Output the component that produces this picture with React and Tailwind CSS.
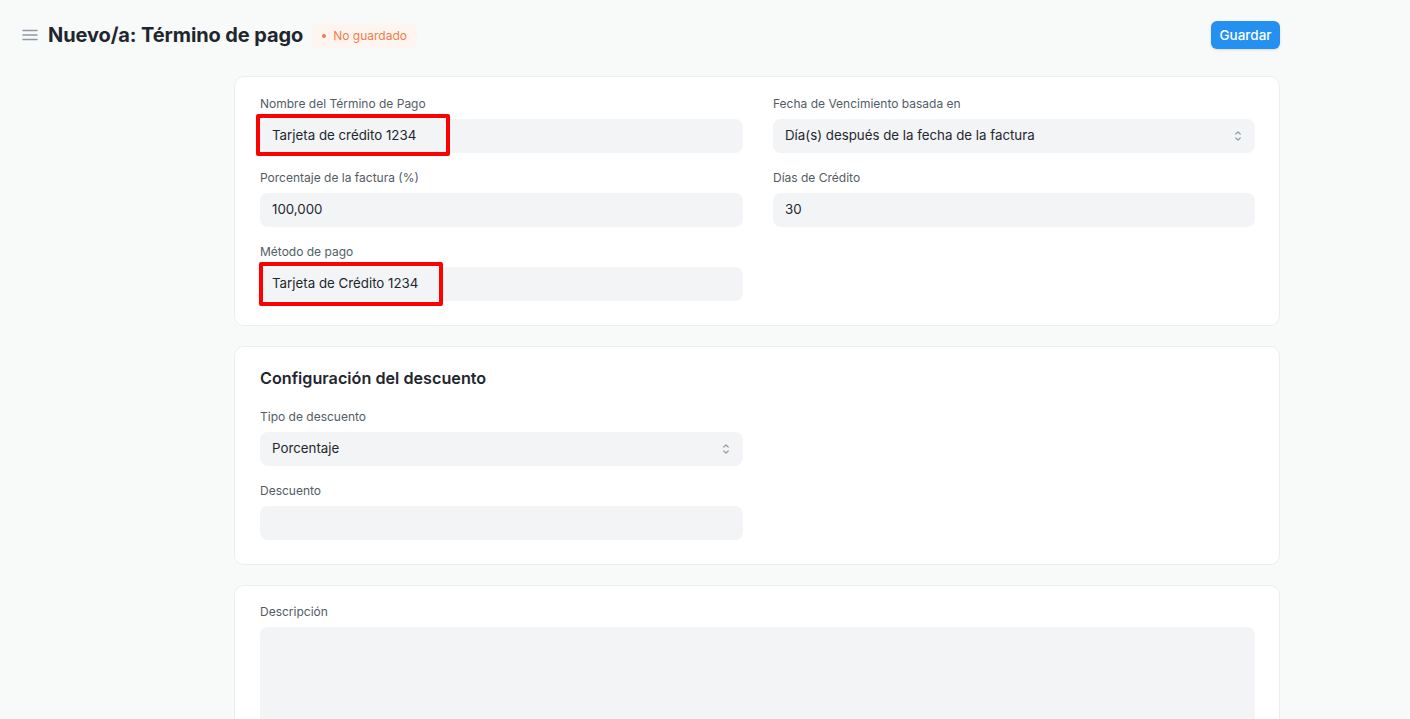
import React from "react";

function Chevrons() {
  return (
    <svg width="12" height="16" viewBox="0 0 12 16" fill="none" stroke="#8d99a6" strokeWidth="1.2" strokeLinecap="round" strokeLinejoin="round">
      <path d="M3.8 6 L6 3.8 L8.2 6" />
      <path d="M3.8 10 L6 12.2 L8.2 10" />
    </svg>
  );
}

function Field({ label, value, select, highlight }) {
  return (
    <div className="flex flex-col">
      <div className="text-[12px] leading-4 text-[#525c65] mb-[7px]">{label}</div>
      <div className="relative h-[34px] rounded-lg bg-[#f3f4f6] flex items-center px-3 text-[13.3px] text-[#1f272e]">
        <span>{value}</span>
        {select && (
          <span className="ml-auto mr-[-1px] flex items-center">
            <Chevrons />
          </span>
        )}
        {highlight && (
          <span className={"absolute border-4 border-[#ff0000] rounded-[2px] pointer-events-none " + highlight} />
        )}
      </div>
    </div>
  );
}

export default function App() {
  return (
    <div className="min-h-screen bg-[#f8f9f9] font-['Inter','Liberation_Sans',sans-serif]">
      <div className="h-[70px] mb-[6px] flex items-center pl-[22px] pr-[130px]">
        <svg width="16" height="14" viewBox="0 0 16 14" className="mr-[10px]" stroke="#8d99a6" strokeWidth="1.5" strokeLinecap="round">
          <path d="M1 2.5 H15" />
          <path d="M1 7 H15" />
          <path d="M1 11.5 H15" />
        </svg>
        <h1 className="text-[20px] font-bold text-[#1f272e] tracking-[-0.1px]">Nuevo/a: Término de pago</h1>
        <span className="ml-[9px] mt-[2px] h-[24px] px-[10px] rounded-md bg-[#fff5f0] text-[#f17c4b] text-[12px] flex items-center gap-[7px]">
          <span className="w-[4px] h-[4px] rounded-full bg-[#f17c4b]" />
          No guardado
        </span>
        <button className="ml-auto h-[28px] w-[69px] rounded-md bg-[#2490ef] text-white text-[13.5px] font-medium shadow-sm">
          Guardar
        </button>
      </div>

      <div className="ml-[234px] w-[1046px] flex flex-col gap-5">
        <div className="bg-white rounded-[10px] border border-[#ebeef0] pt-[19px] pb-[24px] pl-[25px] pr-[24px]">
          <div className="grid grid-cols-[483px_1fr] gap-x-[30px]">
            <div className="flex flex-col gap-[17px]">
              <Field label="Nombre del Término de Pago" value="Tarjeta de crédito 1234" highlight="left-[-4px] top-[-5px] w-[194px] h-[42px]" />
              <Field label="Porcentaje de la factura (%)" value="100,000" />
              <Field label="Método de pago" value="Tarjeta de Crédito 1234" highlight="left-[-1px] top-[-5px] w-[184px] h-[44px]" />
            </div>
            <div className="flex flex-col gap-[17px]">
              <Field label="Fecha de Vencimiento basada en" value="Día(s) después de la fecha de la factura" select />
              <Field label="Días de Crédito" value="30" />
            </div>
          </div>
        </div>

        <div className="bg-white rounded-[10px] border border-[#ebeef0] pt-[19px] pb-[24px] pl-[25px] pr-[24px]">
          <h2 className="text-[16.2px] leading-6 font-semibold text-[#1f272e] mb-[19px]">Configuración del descuento</h2>
          <div className="grid grid-cols-[483px_1fr] gap-x-[30px]">
            <div className="flex flex-col gap-[17px]">
              <Field label="Tipo de descuento" value="Porcentaje" select />
              <Field label="Descuento" value="" />
            </div>
          </div>
        </div>

        <div className="bg-white rounded-[10px] border border-[#ebeef0] pt-[18px] pl-[25px] pr-[24px] h-[200px]">
          <div className="text-[12px] leading-4 text-[#525c65] mb-[7px]">Descripción</div>
          <div className="h-[160px] rounded-lg bg-[#f3f4f6]" />
        </div>
      </div>
    </div>
  );
}
